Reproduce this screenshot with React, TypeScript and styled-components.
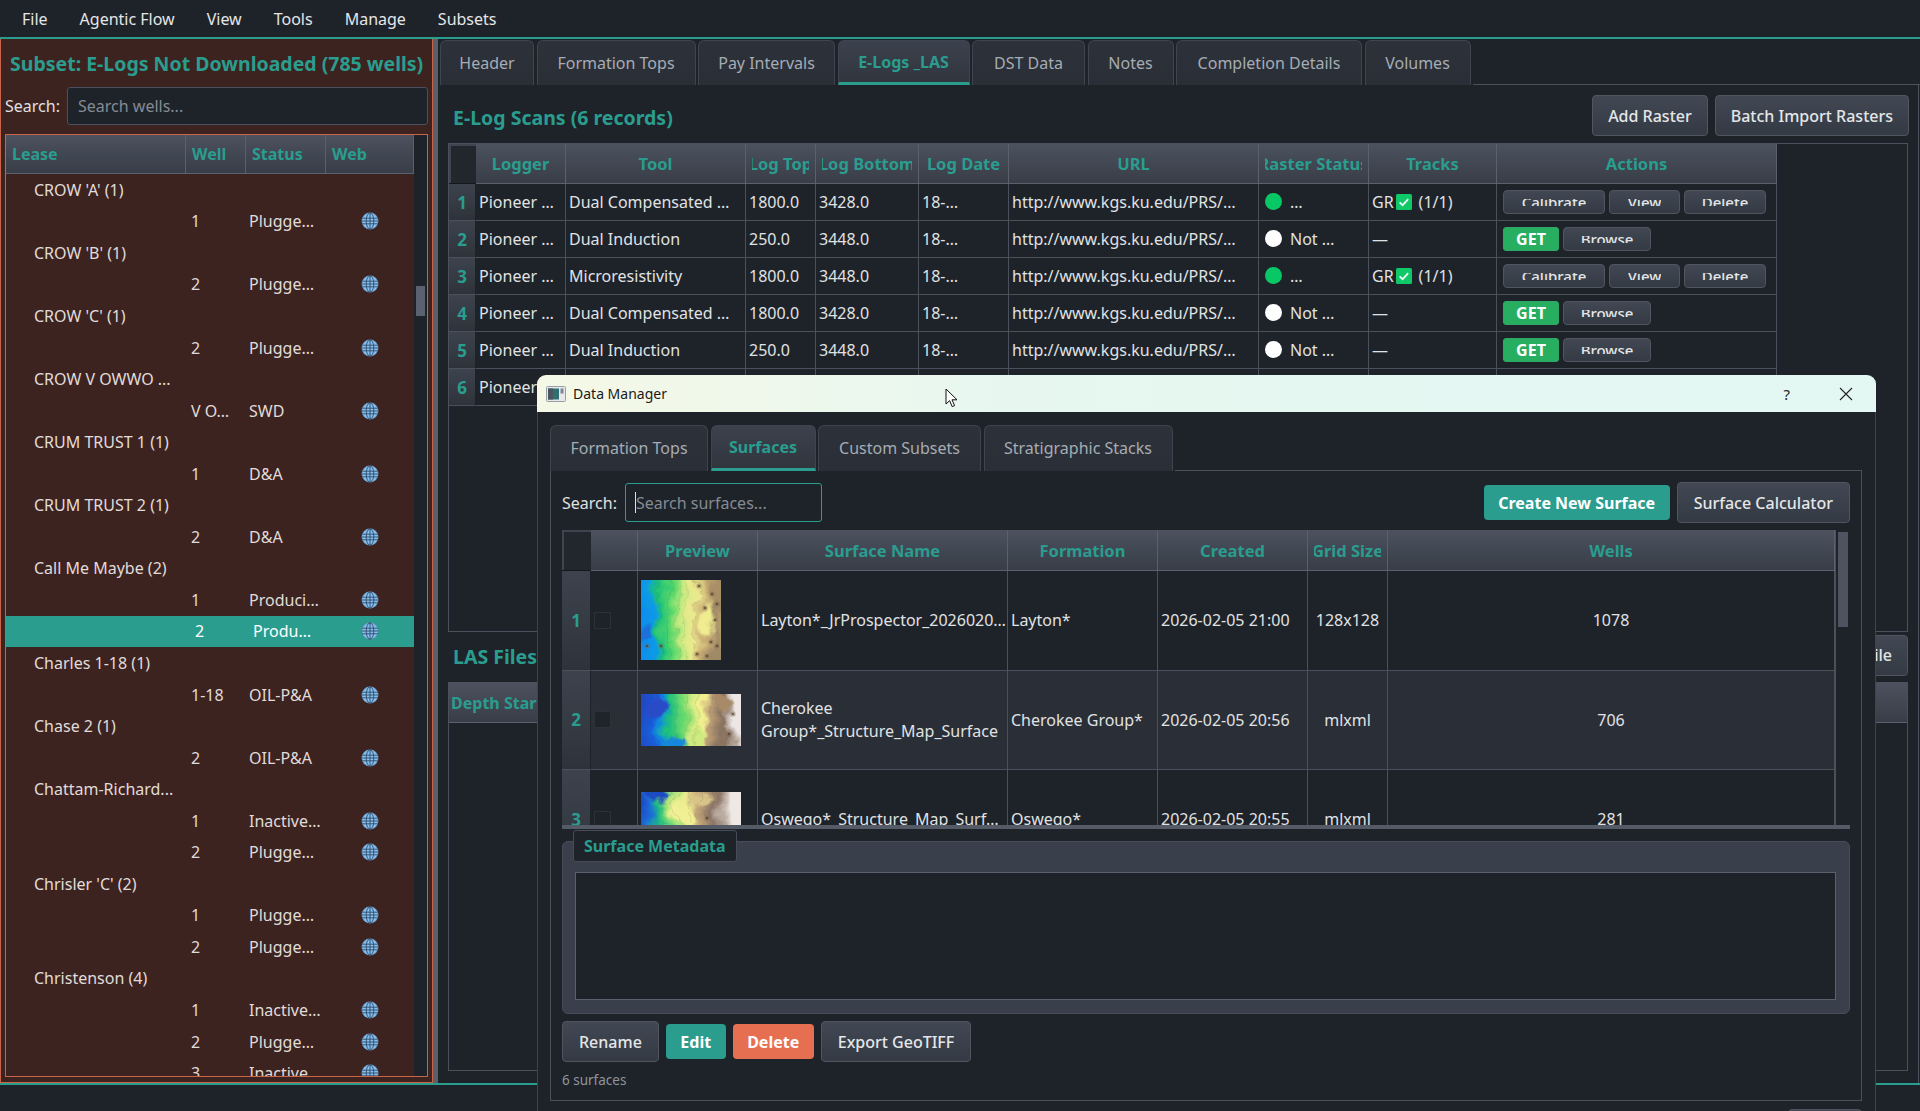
import styled, { createGlobalStyle } from "styled-components";

const BG = "#1e2329";
const TEAL = "#2a9d8f";
const LINE = "#4a505c";
const FONT = `"Noto Sans", "Open Sans", sans-serif`;

const GlobalStyle = createGlobalStyle`
  html, body {
    margin: 0;
    padding: 0;
    background: ${BG};
  }
  * {
    box-sizing: border-box;
  }
  body {
    font-family: ${FONT};
    font-size: 16px;
    color: #e0e0e0;
  }
`;

const menuItems = ["File", "Agentic Flow", "View", "Tools", "Manage", "Subsets"];

type WellRow = { lease?: string; well?: string; status?: string; selected?: boolean };

const wells: WellRow[] = [
  { lease: "CROW 'A' (1)" },
  { well: "1", status: "Plugge…" },
  { lease: "CROW 'B' (1)" },
  { well: "2", status: "Plugge…" },
  { lease: "CROW 'C' (1)" },
  { well: "2", status: "Plugge…" },
  { lease: "CROW V OWWO ..." },
  { well: "V O…", status: "SWD" },
  { lease: "CRUM TRUST 1 (1)" },
  { well: "1", status: "D&A" },
  { lease: "CRUM TRUST 2 (1)" },
  { well: "2", status: "D&A" },
  { lease: "Call Me Maybe (2)" },
  { well: "1", status: "Produci…" },
  { well: "2", status: "Produ…", selected: true },
  { lease: "Charles 1-18 (1)" },
  { well: "1-18", status: "OIL-P&A" },
  { lease: "Chase 2 (1)" },
  { well: "2", status: "OIL-P&A" },
  { lease: "Chattam-Richard..." },
  { well: "1", status: "Inactive…" },
  { well: "2", status: "Plugge…" },
  { lease: "Chrisler 'C' (2)" },
  { well: "1", status: "Plugge…" },
  { well: "2", status: "Plugge…" },
  { lease: "Christenson (4)" },
  { well: "1", status: "Inactive…" },
  { well: "2", status: "Plugge…" },
  { well: "3", status: "Inactive…" },
];

const mainTabs = [
  { label: "Header", width: 94 },
  { label: "Formation Tops", width: 159 },
  { label: "Pay Intervals", width: 137 },
  { label: "E-Logs _LAS", width: 132, active: true },
  { label: "DST Data", width: 113 },
  { label: "Notes", width: 86 },
  { label: "Completion Details", width: 186 },
  { label: "Volumes", width: 106 },
];

const dialogTabs = [
  { label: "Formation Tops", width: 158 },
  { label: "Surfaces", width: 105, active: true },
  { label: "Custom Subsets", width: 163 },
  { label: "Stratigraphic Stacks", width: 189 },
];

const scanColumns = "27px 90px 180px 70px 103px 90px 250px 110px 128px 280px";
const scanHeaders = ["Logger", "Tool", "Log Top", "Log Bottom", "Log Date", "URL", "Raster Status", "Tracks", "Actions"];

const scans = [
  { tool: "Dual Compensated …", top: "1800.0", bottom: "3428.0", done: true },
  { tool: "Dual Induction", top: "250.0", bottom: "3448.0", done: false },
  { tool: "Microresistivity", top: "1800.0", bottom: "3448.0", done: true },
  { tool: "Dual Compensated …", top: "1800.0", bottom: "3428.0", done: false },
  { tool: "Dual Induction", top: "250.0", bottom: "3448.0", done: false },
  { tool: "Dual Induction", top: "250.0", bottom: "3448.0", done: false },
];

const surfaceColumns = "29px 47px 120px 250px 150px 150px 80px 1fr";
const surfaceHeaders = ["", "Preview", "Surface Name", "Formation", "Created", "Grid Size", "Wells"];

const thumbs = {
  layton: {
    width: 80,
    height: 80,
    seed: 4,
    stops: [
      [0, "#0a86ee"], [24, "#0b9ae8"], [32, "#1fc27a"], [48, "#5fd96a"],
      [60, "#c4ea80"], [74, "#ecea8e"], [86, "#c9ad74"], [100, "#a08a66"],
    ],
    blobs: [
      [82, 12, 10, 14, "#a98e66"],
      [86, 50, 6, 16, "#b39a6e"],
      [72, 44, 6, 16, "#f0ec90"],
      [12, 60, 8, 10, "#1a6fd8"],
    ],
    spots: [[58, 6], [71, 14], [76, 24], [64, 28], [74, 40], [70, 62], [76, 66], [56, 74], [66, 76], [20, 66], [6, 66]],
  },
  cherokee: {
    width: 100,
    height: 52,
    seed: 9,
    stops: [
      [0, "#2544c0"], [22, "#1a5cd8"], [30, "#0f8fe0"], [37, "#20c07c"], [52, "#74dc6c"],
      [62, "#d8ec84"], [70, "#f4f090"], [76, "#c2a478"], [90, "#86705f"], [100, "#ece6e4"],
    ],
    blobs: [
      [42, 50, 14, 8, "#1488dc"],
      [22, 14, 12, 9, "#2a4cc8"],
      [66, 46, 8, 10, "#cfea80"],
      [90, 12, 8, 8, "#a88a68"],
    ],
    spots: [[92, 20], [88, 40]],
  },
  oswego: {
    width: 100,
    height: 55,
    seed: 15,
    stops: [
      [0, "#2040c0"], [18, "#1a70d8"], [28, "#20c080"], [38, "#a4e478"], [52, "#f0ee90"],
      [66, "#c4a67a"], [84, "#8b7565"], [100, "#efe9e6"],
    ],
    blobs: [
      [50, 26, 12, 9, "#f2f094"],
      [26, 10, 12, 7, "#1f4cc4"],
      [68, 12, 12, 6, "#d8c488"],
    ],
    spots: [[66, 26]],
  },
};

function Thumb({ kind }: { kind: keyof typeof thumbs }) {
  const t = thumbs[kind];
  return (
    <svg width={t.width} height={t.height} viewBox={`0 0 ${t.width} ${t.height}`} style={{ display: "block" }}>
      <defs>
        <linearGradient id={`grad-${kind}`} gradientUnits="userSpaceOnUse" x1="0" x2={t.width} y1="0" y2="0">
          {t.stops.map(([at, color]) => (
            <stop key={at} offset={`${at}%`} stopColor={color as string} />
          ))}
        </linearGradient>
        <filter id={`warp-${kind}`} x="-20%" y="-20%" width="140%" height="140%">
          <feTurbulence type="fractalNoise" baseFrequency="0.035" numOctaves="4" seed={t.seed} />
          <feDisplacementMap in="SourceGraphic" scale="26" xChannelSelector="R" yChannelSelector="G" />
        </filter>
        <filter id={`soft-${kind}`} x="-30%" y="-30%" width="160%" height="160%">
          <feGaussianBlur stdDeviation="1.6" />
        </filter>
      </defs>
      <g filter={`url(#warp-${kind})`}>
        <g transform="translate(-8 -3)">
          <rect x={-t.width * 0.3} y={-30} width={t.width * 1.7} height={t.height + 70} fill={`url(#grad-${kind})`} />
          <g filter={`url(#soft-${kind})`}>
            {t.blobs.map(([cx, cy, rx, ry, color]) => (
              <ellipse key={`${cx}-${cy}`} cx={cx} cy={cy} rx={rx} ry={ry} fill={color as string} />
            ))}
          </g>
          {[0.3, 0.42, 0.54, 0.64, 0.76].map((at) => (
            <path
              key={at}
              d={`M${t.width * at} -10 C${t.width * (at + 0.08)} ${t.height * 0.3} ${t.width * (at - 0.06)} ${t.height * 0.6} ${t.width * (at + 0.03)} ${t.height + 10}`}
              fill="none"
              stroke="#2a4a30"
              strokeOpacity="0.25"
              strokeWidth="0.5"
            />
          ))}
        </g>
      </g>
      {t.spots.map(([x, y]) => (
        <g key={`${x}-${y}`}>
          <circle cx={x} cy={y} r="2.6" fill="#7a6148" fillOpacity="0.45" />
          <circle cx={x} cy={y} r="1" fill="#3e3026" fillOpacity="0.75" />
        </g>
      ))}
    </svg>
  );
}

function Globe() {
  return (
    <svg width="18" height="18" viewBox="0 0 18 18">
      <circle cx="9" cy="9" r="8.4" fill="#86c0f0" />
      <g fill="none" stroke="#2f4a68" strokeWidth="0.9">
        <circle cx="9" cy="9" r="8.2" strokeOpacity="0.35" />
        <ellipse cx="9" cy="9" rx="3.8" ry="8.2" />
        <path d="M9 .8V17.2M1.2 6.2H16.8M1.2 11.8H16.8M.8 9H17.2" />
      </g>
    </svg>
  );
}

function TrackCheck() {
  return (
    <svg width="16" height="16" viewBox="0 0 16 16">
      <rect width="16" height="16" rx="1.5" fill="#0fc868" />
      <path d="M3.6 8.4l3 2.8 5.6-6" fill="none" stroke="#f2fff8" strokeWidth="1.7" />
    </svg>
  );
}

function WindowIcon() {
  return (
    <svg width="20" height="16" viewBox="0 0 20 16">
      <rect x="0.5" y="0.5" width="19" height="15" rx="1" fill="#e6e8ea" stroke="#9a9fa6" />
      <rect x="2" y="2.5" width="11" height="11" fill="#2f6f72" />
      <rect x="2" y="2.5" width="5" height="11" fill="#4a5560" />
      <rect x="14.5" y="2.5" width="3" height="5" fill="#7d8794" />
    </svg>
  );
}

export default function App() {
  return (
    <Page>
      <GlobalStyle />
      <MenuBar>
        {menuItems.map((item) => (
          <MenuItem key={item}>{item}</MenuItem>
        ))}
      </MenuBar>

      <Workspace>
        <WellPanel>
          <PanelTitle>Subset: E-Logs Not Downloaded (785 wells)</PanelTitle>
          <PanelSearch>
            <SearchLabel>Search:</SearchLabel>
            <WellSearchInput placeholder="Search wells..." />
          </PanelSearch>
          <WellTable>
            <WellColumn>
              <WellHeader>
                <WellHeadCell>Lease</WellHeadCell>
                <WellHeadCell>Well</WellHeadCell>
                <WellHeadCell>Status</WellHeadCell>
                <WellHeadCell>Web</WellHeadCell>
              </WellHeader>
              <WellRows>
                {wells.map((row, i) =>
                  row.lease ? (
                    <LeaseRow key={i}>{row.lease}</LeaseRow>
                  ) : (
                    <WellItem key={i} $selected={row.selected}>
                      <span />
                      <WellCell $selected={row.selected} $inset={5}>{row.well}</WellCell>
                      <WellCell $selected={row.selected} $inset={3}>{row.status}</WellCell>
                      <GlobeCell><Globe /></GlobeCell>
                    </WellItem>
                  )
                )}
              </WellRows>
            </WellColumn>
            <WellScroll>
              <WellThumb />
            </WellScroll>
          </WellTable>
        </WellPanel>

        <Splitter />

        <Main>
          <TabStrip>
            {mainTabs.map((tab) => (
              <Tab key={tab.label} $width={tab.width} $active={tab.active}>{tab.label}</Tab>
            ))}
            <TabFiller />
          </TabStrip>

          <MainPane>
            <SectionHead>
              <ScanTitle>E-Log Scans (6 records)</ScanTitle>
              <ButtonRow>
                <ToolButton>Add Raster</ToolButton>
                <ToolButton>Batch Import Rasters</ToolButton>
              </ButtonRow>
            </SectionHead>

            <ScanFrame>
              <ScanHeadRow>
                <Corner />
                {scanHeaders.map((h) => (
                  <HeadCell key={h}><HeadText>{h}</HeadText></HeadCell>
                ))}
              </ScanHeadRow>
              {scans.map((scan, i) => (
                <ScanRow key={i}>
                  <RowNumber>{i + 1}</RowNumber>
                  <Cell>Pioneer …</Cell>
                  <Cell>{scan.tool}</Cell>
                  <Cell>{scan.top}</Cell>
                  <Cell>{scan.bottom}</Cell>
                  <Cell>18-…</Cell>
                  <Cell>http://www.kgs.ku.edu/PRS/…</Cell>
                  <Cell>
                    <StatusDot $done={scan.done} />
                    {scan.done ? "…" : "Not …"}
                  </Cell>
                  <Cell>
                    {scan.done ? (
                      <>
                        GR<TrackMark><TrackCheck /></TrackMark>(1/1)
                      </>
                    ) : (
                      "—"
                    )}
                  </Cell>
                  <ActionCell>
                    {scan.done ? (
                      <>
                        <RowButton $width={102}><Clipped>Calibrate</Clipped></RowButton>
                        <RowButton $width={71}><Clipped>View</Clipped></RowButton>
                        <RowButton $width={82}><Clipped>Delete</Clipped></RowButton>
                      </>
                    ) : (
                      <>
                        <GetButton>GET</GetButton>
                        <RowButton $width={88}><Clipped>Browse</Clipped></RowButton>
                      </>
                    )}
                  </ActionCell>
                </ScanRow>
              ))}
            </ScanFrame>

            <PaneSplitter />

            <LasHead>
              <SectionTitle>LAS Files</SectionTitle>
              <LasButton>Add LAS File</LasButton>
            </LasHead>

            <LasFrame>
              <LasHeader>
                <LasHeadCell>Depth Start</LasHeadCell>
              </LasHeader>
            </LasFrame>
          </MainPane>
        </Main>
      </Workspace>

      <BottomRule />

      <Dialog>
        <TitleBar>
          <WindowIcon />
          <TitleText>Data Manager</TitleText>
          <TitleHelp>?</TitleHelp>
          <TitleClose>
            <svg width="14" height="14" viewBox="0 0 14 14">
              <path d="M1 1l12 12M13 1L1 13" stroke="#222" strokeWidth="1.1" fill="none" />
            </svg>
          </TitleClose>
          <Cursor viewBox="0 0 14 20" width="14" height="20">
            <path d="M1 1v15l3.6-3.4 2.6 6 2.4-1-2.6-5.8h5z" fill="#fff" stroke="#111" strokeWidth="1" />
          </Cursor>
        </TitleBar>

        <DialogBody>
          <DialogTabs>
            {dialogTabs.map((tab) => (
              <Tab key={tab.label} $width={tab.width} $active={tab.active}>{tab.label}</Tab>
            ))}
            <TabFiller />
          </DialogTabs>

          <DialogPane>
            <Toolbar>
              <SearchLabel>Search:</SearchLabel>
              <SearchField>
                <SurfaceSearchInput placeholder="Search surfaces..." />
              </SearchField>
              <ToolbarSpace />
              <CreateButton>Create New Surface</CreateButton>
              <ToolButton>Surface Calculator</ToolButton>
            </Toolbar>

            <SurfaceFrame>
              <SurfaceView>
                <SurfaceRow $head>
                  <Corner />
                  {surfaceHeaders.map((h, i) => (
                    <HeadCell key={i}><HeadText>{h}</HeadText></HeadCell>
                  ))}
                </SurfaceRow>
                <SurfaceRow>
                  <RowNumber>1</RowNumber>
                  <CheckCell><Check /></CheckCell>
                  <PreviewCell><Thumb kind="layton" /></PreviewCell>
                  <Cell>Layton*_JrProspector_2026020…</Cell>
                  <Cell>Layton*</Cell>
                  <Cell>2026-02-05 21:00</Cell>
                  <Cell $center>128x128</Cell>
                  <Cell $center>1078</Cell>
                </SurfaceRow>
                <SurfaceRow $alt>
                  <RowNumber>2</RowNumber>
                  <CheckCell><Check $filled /></CheckCell>
                  <PreviewCell><Thumb kind="cherokee" /></PreviewCell>
                  <WrapCell>Cherokee Group*_Structure_Map_Surface</WrapCell>
                  <Cell>Cherokee Group*</Cell>
                  <Cell>2026-02-05 20:56</Cell>
                  <Cell $center>mlxml</Cell>
                  <Cell $center>706</Cell>
                </SurfaceRow>
                <SurfaceRow>
                  <RowNumber>3</RowNumber>
                  <CheckCell><Check /></CheckCell>
                  <PreviewCell><Thumb kind="oswego" /></PreviewCell>
                  <Cell>Oswego*_Structure_Map_Surf…</Cell>
                  <Cell>Oswego*</Cell>
                  <Cell>2026-02-05 20:55</Cell>
                  <Cell $center>mlxml</Cell>
                  <Cell $center>281</Cell>
                </SurfaceRow>
              </SurfaceView>
              <SurfaceScroll>
                <SurfaceThumb />
              </SurfaceScroll>
            </SurfaceFrame>

            <MetaGroup>
              <MetaChip>Surface Metadata</MetaChip>
              <MetaText />
            </MetaGroup>

            <FooterButtons>
              <ToolButton>Rename</ToolButton>
              <AccentButton $color={TEAL}>Edit</AccentButton>
              <AccentButton $color="#e76f51">Delete</AccentButton>
              <ToolButton>Export GeoTIFF</ToolButton>
            </FooterButtons>

            <CountText>6 surfaces</CountText>
          </DialogPane>

          <DialogFoot>
            <CloseButton>Close</CloseButton>
          </DialogFoot>
        </DialogBody>
      </Dialog>
    </Page>
  );
}

const Page = styled.div`
  position: relative;
  display: flex;
  flex-direction: column;
  width: 1920px;
  height: 1111px;
  overflow: hidden;
  background: ${BG};
`;

const MenuBar = styled.div`
  display: flex;
  flex: none;
  align-items: center;
  height: 39px;
  padding: 0 0 0 6px;
  border-bottom: 2px solid ${TEAL};
`;

const MenuItem = styled.div`
  padding: 0 16px;
  font-size: 16px;
  color: #e4e6e8;
`;

const Workspace = styled.div`
  display: flex;
  flex: none;
  height: 1044px;
`;

const WellPanel = styled.section`
  display: flex;
  flex: none;
  flex-direction: column;
  width: 433px;
  padding: 0 4px 5px 4px;
  background: #3d2320;
  border: 1px solid #c8644a;
  border-top: none;
`;

const PanelTitle = styled.h2`
  margin: 0;
  flex: none;
  height: 48px;
  padding-left: 5px;
  font-size: 19.5px;
  line-height: 50px;
  font-weight: 700;
  white-space: nowrap;
  color: ${TEAL};
`;

const PanelSearch = styled.div`
  display: flex;
  flex: none;
  align-items: center;
  height: 38px;
  margin-bottom: 9px;
`;

const SearchLabel = styled.label`
  flex: none;
  width: 62px;
  font-size: 16px;
  white-space: nowrap;
  color: #e0e0e0;
`;

const WellSearchInput = styled.input`
  flex: 1;
  min-width: 0;
  height: 38px;
  padding: 0 10px;
  font: 16px ${FONT};
  color: #e0e0e0;
  background: ${BG};
  border: 1px solid #4a505c;
  border-radius: 3px;
  outline: none;

  &::placeholder {
    color: #858b94;
  }
`;

const WellTable = styled.div`
  display: flex;
  flex: 1;
  min-height: 0;
  border: 1px solid #c8644a;
`;

const WellColumn = styled.div`
  display: flex;
  flex: none;
  flex-direction: column;
  width: 408px;
  min-height: 0;
`;

const WellHeader = styled.div`
  display: grid;
  flex: none;
  grid-template-columns: 180px 60px 80px 88px;
  height: 39px;
  border-bottom: 1px solid #5a606c;
  background: linear-gradient(#4c525e, #383d47);
`;

const WellHeadCell = styled.div`
  display: flex;
  align-items: center;
  padding-left: 6px;
  font-size: 16px;
  font-weight: 700;
  color: ${TEAL};
  border-right: 1px solid #5a606c;
`;

const WellRows = styled.div`
  flex: 1;
  min-height: 0;
  overflow: hidden;
`;

const LeaseRow = styled.div`
  display: flex;
  align-items: center;
  height: 31.55px;
  padding-left: 28px;
  font-size: 16px;
  white-space: nowrap;
  color: #e0dcda;
`;

const WellItem = styled.div<{ $selected?: boolean }>`
  display: grid;
  grid-template-columns: 180px 60px 80px 88px;
  align-items: center;
  height: 31.55px;
  font-size: 16px;
  color: ${(p) => (p.$selected ? "#ffffff" : "#e0dcda")};
  background: ${(p) => (p.$selected ? TEAL : "transparent")};
`;

const WellCell = styled.div<{ $selected?: boolean; $inset: number }>`
  padding-left: ${(p) => (p.$selected ? p.$inset + 4 : p.$inset)}px;
  white-space: nowrap;
`;

const GlobeCell = styled.div`
  display: flex;
  justify-content: center;
`;

const WellScroll = styled.div`
  flex: 1;
  padding: 151px 2px 0 2px;
  background: ${BG};
`;

const WellThumb = styled.div`
  height: 30px;
  background: #5a6270;
`;

const Splitter = styled.div`
  flex: none;
  width: 5px;
  background: #596069;
`;

const Main = styled.main`
  display: flex;
  flex: 1;
  flex-direction: column;
  min-width: 0;
`;

const TabStrip = styled.div`
  display: flex;
  flex: none;
  gap: 2.5px;
  height: 46px;
  padding-left: 2px;
  padding-top: 1px;
`;

const DialogTabs = styled.div`
  display: flex;
  flex: none;
  gap: 2.5px;
  height: 46px;
`;

const Tab = styled.div<{ $width: number; $active?: boolean }>`
  display: flex;
  flex: none;
  align-items: center;
  justify-content: center;
  width: ${(p) => p.$width}px;
  padding-bottom: ${(p) => (p.$active ? 0 : 1)}px;
  font-size: 16px;
  font-weight: ${(p) => (p.$active ? 700 : 400)};
  white-space: nowrap;
  overflow: hidden;
  color: ${(p) => (p.$active ? TEAL : "#a6acb4")};
  background: ${(p) => (p.$active ? "linear-gradient(#3c424d, #30353e)" : "linear-gradient(#2d323a, #2a2f37)")};
  border: 1px solid #3f4550;
  border-bottom: ${(p) => (p.$active ? `3px solid ${TEAL}` : "none")};
  border-radius: 6px 6px 0 0;
`;

const TabFiller = styled.div`
  flex: 1;
  border-bottom: 1px solid ${LINE};
`;

const MainPane = styled.div`
  display: flex;
  flex: 1;
  flex-direction: column;
  min-height: 0;
  margin-right: 1px;
  padding: 0 10px 12px 10px;
  border-right: 1px solid ${LINE};
`;

const SectionHead = styled.div`
  display: flex;
  flex: none;
  align-items: center;
  justify-content: space-between;
  height: 58px;
  padding: 8px 0 5px 5px;
`;

const SectionTitle = styled.h3`
  margin: 0;
  font-size: 19.5px;
  font-weight: 700;
  color: ${TEAL};
`;

const ScanTitle = styled(SectionTitle)`
  padding-top: 4px;
`;

const ToolButton = styled.button`
  flex: none;
  height: 41px;
  padding: 0 16px;
  font: 500 16px ${FONT};
  color: #e4e6e8;
  white-space: nowrap;
  background: linear-gradient(#424853, #343a44);
  border: 1px solid #50565f;
  border-radius: 4px;
`;

const ButtonRow = styled.div`
  display: flex;
  gap: 7px;
  margin-right: -1px;

  ${ToolButton} {
    padding: 0 15px;
  }
`;

const LasButton = styled(ToolButton)`
  padding-right: 15px;
`;

const AccentButton = styled.button<{ $color: string }>`
  flex: none;
  align-self: center;
  height: 35px;
  padding: 0 14.5px;
  font: 700 16px ${FONT};
  color: #ffffff;
  white-space: nowrap;
  background: ${(p) => p.$color};
  border: none;
  border-radius: 4px;
`;

const CreateButton = styled(AccentButton).attrs({ $color: TEAL })``;

const ScanFrame = styled.div`
  flex: none;
  height: 489px;
  overflow: hidden;
  border: 1px solid ${LINE};
`;

const ScanHeadRow = styled.div`
  display: grid;
  grid-template-columns: ${scanColumns};
  width: 1328px;
  height: 40px;
`;

const ScanRow = styled.div`
  display: grid;
  grid-template-columns: ${scanColumns};
  width: 1328px;
  height: 37px;
`;

const Corner = styled.div`
  background: #22262d;
  box-shadow: inset 2px 2px 0 #3f4550;
  border-bottom: 1px solid #14181c;
`;

const HeadCell = styled.div`
  display: flex;
  align-items: center;
  min-width: 0;
  padding: 0 6px;
  background: linear-gradient(#4c525e, #383d47);
  border-right: 1px solid #5a606c;
  border-bottom: 1px solid #5a606c;
`;

/* long titles clip on both sides, inside the cell margin */
const HeadText = styled.div`
  display: flex;
  justify-content: center;
  width: 100%;
  overflow: hidden;
  font-size: 16.5px;
  font-weight: 700;
  white-space: nowrap;
  color: ${TEAL};
`;

const RowNumber = styled.div`
  display: flex;
  align-items: center;
  justify-content: center;
  font-size: 17px;
  font-weight: 700;
  color: ${TEAL};
  background: linear-gradient(#3d434d, #2e333b);
  border-right: 1px solid #1e2329;
  border-bottom: 1px solid ${LINE};
`;

const Cell = styled.div<{ $center?: boolean }>`
  display: flex;
  align-items: center;
  justify-content: ${(p) => (p.$center ? "center" : "flex-start")};
  min-width: 0;
  padding: 0 3px;
  overflow: hidden;
  font-size: 16px;
  white-space: nowrap;
  color: #e0e2e4;
  border-right: 1px solid ${LINE};
  border-bottom: 1px solid ${LINE};
`;

const WrapCell = styled(Cell)`
  white-space: normal;
  line-height: 23px;
`;

const StatusDot = styled.span<{ $done: boolean }>`
  flex: none;
  width: 17px;
  height: 17px;
  margin: 0 8px 2px 3px;
  border-radius: 50%;
  background: ${(p) => (p.$done ? "#08c866" : "#ffffff")};
`;

const TrackMark = styled.span`
  display: flex;
  margin: 0 7px 0 2px;
`;

const ActionCell = styled(Cell)`
  gap: 4px;
  padding: 0 0 0 6px;
`;

const RowButton = styled.button<{ $width: number }>`
  display: flex;
  flex: none;
  align-items: center;
  justify-content: center;
  width: ${(p) => p.$width}px;
  height: 24px;
  padding: 0;
  color: #e4e6e8;
  background: linear-gradient(#424853, #343a44);
  border: 1px solid #50565f;
  border-radius: 4px;
`;

const Clipped = styled.span`
  display: block;
  height: 7px;
  overflow: hidden;
  font: 500 15px/7px ${FONT};
`;

const GetButton = styled.button`
  flex: none;
  width: 56px;
  height: 24px;
  padding: 0;
  font: 700 16px/20px ${FONT};
  color: #ffffff;
  background: #27ae60;
  border: 1px solid #2fa866;
  border-radius: 3px;
`;

const PaneSplitter = styled.div`
  flex: none;
  height: 3px;
`;

const LasHead = styled.div`
  display: flex;
  flex: none;
  align-items: center;
  justify-content: space-between;
  height: 40px;
  padding-left: 5px;
  margin-bottom: 7px;

  ${SectionTitle} {
    padding-top: 2px;
  }
`;

const LasFrame = styled.div`
  flex: 1;
  min-height: 0;
  border: 1px solid ${LINE};
`;

const LasHeader = styled.div`
  height: 40px;
  background: linear-gradient(#4c525e, #383d47);
  border-bottom: 1px solid #5a606c;
`;

const LasHeadCell = styled.div`
  display: flex;
  align-items: center;
  height: 100%;
  padding-left: 2px;
  font-size: 16px;
  font-weight: 700;
  white-space: nowrap;
  color: ${TEAL};
`;

const BottomRule = styled.div`
  flex: none;
  height: 2px;
  background: ${TEAL};
`;

/* floats over the main window */
const Dialog = styled.div`
  position: absolute;
  top: 375px;
  left: 537px;
  display: flex;
  flex-direction: column;
  width: 1339px;
  height: 790px;
  background: ${BG};
  border-left: 1px solid #3f444c;
  border-right: 1px solid #3f444c;
  border-radius: 9px 9px 0 0;
`;

const TitleBar = styled.div`
  position: relative;
  display: flex;
  flex: none;
  align-items: center;
  height: 37px;
  margin: 0 -1px;
  padding: 0 0 0 9px;
  background: linear-gradient(90deg, #f5f8e6, #e7f7f0 35%, #e3f7f3);
  border-radius: 9px 9px 0 0;
`;

const TitleText = styled.span`
  margin-left: 7px;
  font-size: 14px;
  color: #1a1a1a;
`;

const TitleHelp = styled.span`
  margin-left: auto;
  font-size: 15px;
  color: #222222;
`;

const TitleClose = styled.span`
  display: flex;
  margin: 0 23px 0 49px;
`;

const Cursor = styled.svg`
  position: absolute;
  top: 13px;
  left: 408px;
`;

const DialogBody = styled.div`
  display: flex;
  flex: 1;
  flex-direction: column;
  min-height: 0;
  padding: 13px 13px 0 12px;
`;

const DialogPane = styled.div`
  display: flex;
  flex: none;
  flex-direction: column;
  height: 630px;
  padding: 11px 11px 0 11px;
  border: 1px solid ${LINE};
  border-top: none;
`;

const Toolbar = styled.div`
  display: flex;
  flex: none;
  align-items: center;
  gap: 7px;
  height: 41px;

  ${SearchLabel} {
    margin-right: -6px;
  }
`;

/* text caret of the focused search box */
const SearchField = styled.div`
  position: relative;
  flex: none;

  &::after {
    content: "";
    position: absolute;
    top: 9px;
    left: 10px;
    width: 1px;
    height: 21px;
    background: #e0e0e0;
  }
`;

const SurfaceSearchInput = styled.input`
  display: block;
  width: 197px;
  height: 39px;
  padding: 0 10px;
  font: 16px ${FONT};
  color: #e0e0e0;
  background: ${BG};
  border: 1px solid ${TEAL};
  border-radius: 3px;
  outline: none;

  &::placeholder {
    color: #858b94;
  }
`;

const ToolbarSpace = styled.div`
  flex: 1;
`;

const SurfaceFrame = styled.div`
  display: flex;
  flex: none;
  height: 299px;
  margin-top: 7px;
  overflow: hidden;
  border-bottom: 4px solid #555b66;
`;

const SurfaceView = styled.div`
  flex: 1;
  min-width: 0;
  overflow: hidden;
`;

const SurfaceRow = styled.div<{ $head?: boolean; $alt?: boolean }>`
  display: grid;
  grid-template-columns: ${surfaceColumns};
  height: ${(p) => (p.$head ? 41 : 99.5)}px;
  background: ${(p) => (p.$alt ? "#2a2e37" : "transparent")};
`;

const CheckCell = styled(Cell)`
  padding-left: 3px;
`;

const Check = styled.span<{ $filled?: boolean }>`
  display: block;
  width: 17px;
  height: 17px;
  background: ${(p) => (p.$filled ? "#1f242b" : "transparent")};
  border: 1px solid #2c3138;
`;

const PreviewCell = styled(Cell)`
  align-items: center;
`;

const SurfaceScroll = styled.div`
  flex: none;
  width: 15px;
  padding: 2px 2px 0;
  border-left: 1px solid ${LINE};
`;

const SurfaceThumb = styled.div`
  height: 95px;
  background: #4d535f;
`;

const MetaGroup = styled.div`
  position: relative;
  flex: none;
  height: 173px;
  margin-top: 12px;
  padding: 30px 13px 13px 12px;
  background: #3a404b;
  border: 1px solid #474d58;
  border-radius: 6px;
`;

/* group box title sits over the top edge */
const MetaChip = styled.div`
  position: absolute;
  top: -12px;
  left: 10px;
  display: flex;
  align-items: center;
  width: 164px;
  height: 32px;
  padding-left: 10px;
  font-size: 16px;
  font-weight: 700;
  white-space: nowrap;
  color: ${TEAL};
  background: ${BG};
  border: 1px solid #474d58;
  border-radius: 3px;
`;

const MetaText = styled.div`
  height: 100%;
  background: ${BG};
  border: 1px solid #5a606c;
`;

const FooterButtons = styled.div`
  display: flex;
  flex: none;
  gap: 7px;
  height: 41px;
  margin-top: 7px;
`;

const CountText = styled.div`
  flex: none;
  margin-top: 9px;
  font-size: 13.5px;
  color: #8f959d;
`;

const DialogFoot = styled.div`
  display: flex;
  flex: none;
  justify-content: flex-end;
  margin-top: 8px;
`;

const CloseButton = styled.button`
  width: 74px;
  height: 41px;
  font: 16px ${FONT};
  color: #e4e6e8;
  background: linear-gradient(#424853, #343a44);
  border: 1px solid #50565f;
  border-radius: 4px;
`;
